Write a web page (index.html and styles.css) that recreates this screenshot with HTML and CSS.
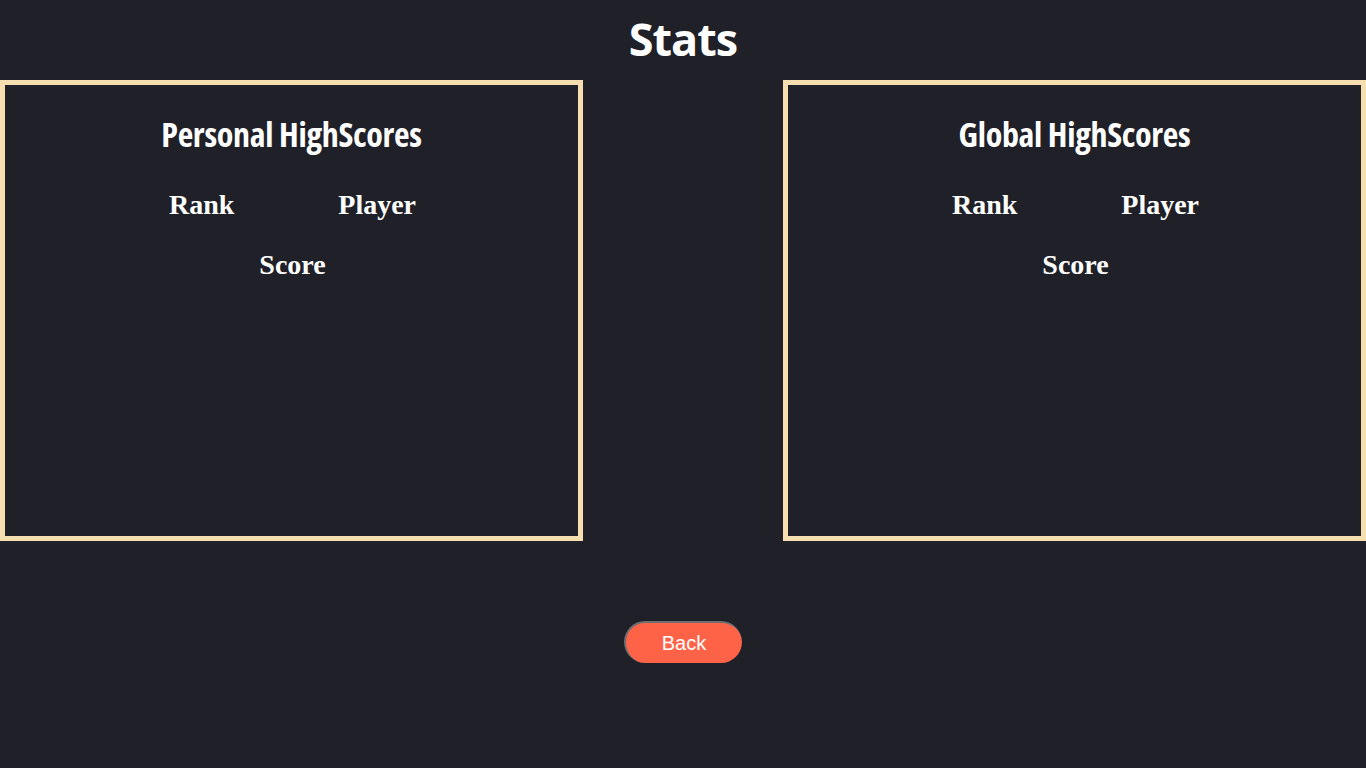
FILE: index.html
```html
<!DOCTYPE html>
<html lang="en">
<head>
<meta charset="utf-8">
<title>Stats</title>
<link rel="stylesheet" href="styles.css">
</head>
<body>
<h1 class="page-title">Stats</h1>
<main class="boards">
  <section class="board">
    <h2 class="board-title">Personal HighScores</h2>
    <div class="cols">
      <h3 class="col">Rank</h3>
      <h3 class="col">Player</h3>
      <h3 class="col">Score</h3>
    </div>
  </section>
  <section class="board">
    <h2 class="board-title">Global HighScores</h2>
    <div class="cols">
      <h3 class="col">Rank</h3>
      <h3 class="col">Player</h3>
      <h3 class="col">Score</h3>
    </div>
  </section>
</main>
<div class="actions">
  <button class="back-btn" type="button">Back</button>
</div>
</body>
</html>
```
FILE: styles.css
```css
html, body {
  margin: 0;
  padding: 0;
  background: #202028;
  color: #ffffff;
}

body {
  width: 1366px;
  height: 768px;
  overflow: hidden;
}

.page-title {
  margin: 0;
  height: 80px;
  display: flex;
  align-items: center;
  justify-content: center;
  font-family: "Open Sans", sans-serif;
  font-stretch: 90%;
  font-weight: 700;
  font-size: 45px;
  letter-spacing: -1px;
  padding-bottom: 4px;
  box-sizing: border-box;
}

.boards {
  display: flex;
  justify-content: space-between;
}

.board {
  width: 583px;
  height: 461px;
  box-sizing: border-box;
  border: 5px solid #f7deb0;
  display: flex;
  flex-direction: column;
  align-items: center;
}

.board-title {
  margin: 29px 0 0;
  font-family: "Open Sans", sans-serif;
  font-stretch: 75%;
  font-weight: 700;
  font-size: 34px;
  letter-spacing: -0.3px;
  line-height: 40px;
}

.cols {
  width: 420px;
  margin-top: 36px;
  display: flex;
  flex-wrap: wrap;
  justify-content: center;
  row-gap: 30px;
}

.col {
  margin: 0 51px 0 53px;
  font-family: "Liberation Serif", serif;
  font-weight: 700;
  font-size: 28px;
  line-height: 30px;
}

.actions {
  display: flex;
  justify-content: center;
  margin-top: 80px;
}

.back-btn {
  width: 118px;
  height: 42px;
  border-radius: 21px;
  border-style: solid;
  border-width: 2px 0 0 2px;
  border-color: #6f6f72 transparent transparent #6f6f72;
  background: #ff6347;
  color: #ffffff;
  font-family: "Liberation Sans", Arial, sans-serif;
  font-size: 20px;
  padding: 0;
}
```
